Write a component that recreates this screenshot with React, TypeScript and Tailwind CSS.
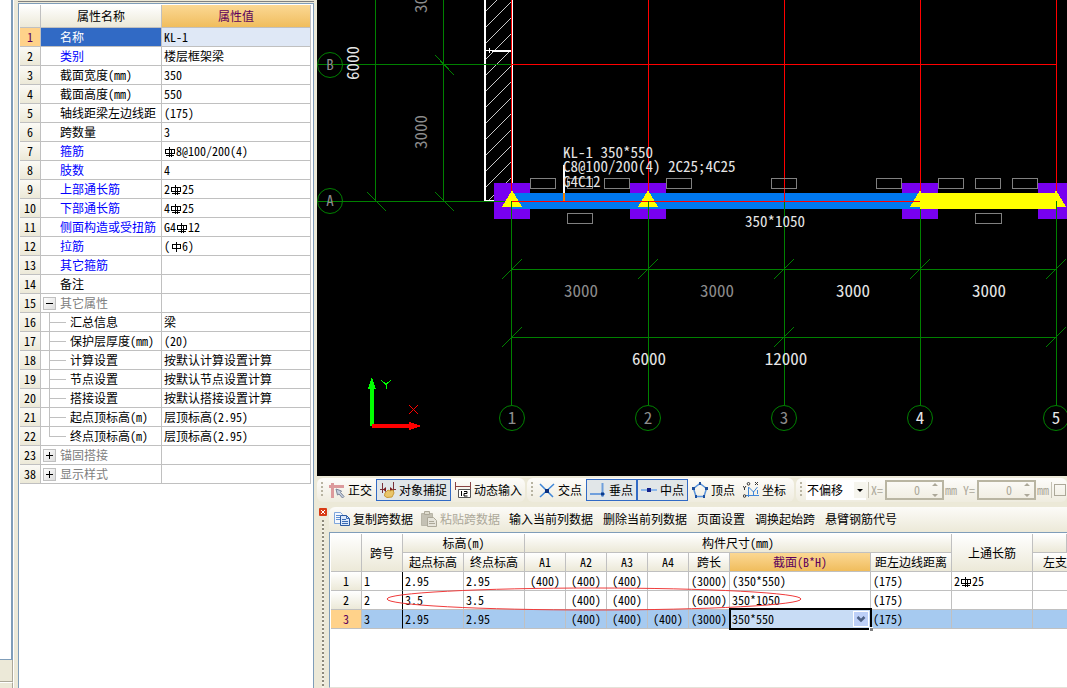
import type { ReactNode } from "react";
import clsx from "clsx";

type Prop = {
  no: number;
  name: string;
  value?: string;
  kind?: "link" | "group" | "child";
  open?: boolean;
};

// "#" stands for the ribbed bar mark, "%" for the plain bar mark
const props: Prop[] = [
  { no: 1, name: "名称", value: "KL-1" },
  { no: 2, name: "类别", value: "楼层框架梁", kind: "link" },
  { no: 3, name: "截面宽度(mm)", value: "350" },
  { no: 4, name: "截面高度(mm)", value: "550" },
  { no: 5, name: "轴线距梁左边线距", value: "(175)" },
  { no: 6, name: "跨数量", value: "3" },
  { no: 7, name: "箍筋", value: "#8@100/200(4)", kind: "link" },
  { no: 8, name: "肢数", value: "4", kind: "link" },
  { no: 9, name: "上部通长筋", value: "2#25", kind: "link" },
  { no: 10, name: "下部通长筋", value: "4#25", kind: "link" },
  { no: 11, name: "侧面构造或受扭筋", value: "G4#12", kind: "link" },
  { no: 12, name: "拉筋", value: "(%6)", kind: "link" },
  { no: 13, name: "其它箍筋", kind: "link" },
  { no: 14, name: "备注" },
  { no: 15, name: "其它属性", kind: "group", open: true },
  { no: 16, name: "汇总信息", value: "梁", kind: "child" },
  { no: 17, name: "保护层厚度(mm)", value: "(20)", kind: "child" },
  { no: 18, name: "计算设置", value: "按默认计算设置计算", kind: "child" },
  { no: 19, name: "节点设置", value: "按默认节点设置计算", kind: "child" },
  { no: 20, name: "搭接设置", value: "按默认搭接设置计算", kind: "child" },
  { no: 21, name: "起点顶标高(m)", value: "层顶标高(2.95)", kind: "child" },
  { no: 22, name: "终点顶标高(m)", value: "层顶标高(2.95)", kind: "child" },
  { no: 23, name: "锚固搭接", kind: "group" },
  { no: 38, name: "显示样式", kind: "group" },
];

const spans = [
  ["1", "2.95", "2.95", "(400)", "(400)", "(400)", "", "(3000)", "(350*550)", "(175)", "2#25"],
  ["2", "3.5", "3.5", "", "(400)", "(400)", "", "(6000)", "350*1050", "(175)", ""],
  ["3", "2.95", "2.95", "", "(400)", "(400)", "(400)", "(3000)", "350*550", "(175)", ""],
];

const head = "bg-linear-to-b from-white to-[#ece9d8]";
const headActive = "bg-linear-to-b from-[#fbd893] to-[#f0bd5c] text-[#5c005c]";
const line = "border-b border-r border-[#c0c0c0]";

function Bar({ plain }: { plain?: boolean }) {
  return (
    <svg role="img" aria-label={plain ? "HPB300" : "HRB400"} className="inline-block size-3 align-[-2px]" viewBox="0 0 12 12" fill="none" stroke="currentColor" shapeRendering="crispEdges">
      {plain ? (
        <path d="M2.5 3.5h8v4h-8zM6.5 1v10" />
      ) : (
        <path d="M1.5 3.5h9v4h-9zM5.5 1v10M7.5 3v8M2 9.5h8" />
      )}
    </svg>
  );
}

function Marked({ text }: { text: string }) {
  return (
    <>
      {text.split(/([#%])/).map((part, i) => {
        if (part === "#") return <Bar key={i} />;
        if (part === "%") return <Bar key={i} plain />;
        return part;
      })}
    </>
  );
}

function PropertyTable() {
  return (
    <table className="w-full table-fixed border-separate border-spacing-0 leading-[18px]">
      <colgroup>
        <col className="w-[21px]" />
        <col className="w-[121px]" />
        <col />
      </colgroup>
      <thead>
        <tr className="h-[23px]">
          <th className={clsx(line, head, "p-0")} />
          <th className={clsx(line, head, "p-0 font-normal")}>属性名称</th>
          <th className={clsx(line, headActive, "p-0 font-normal")}>属性值</th>
        </tr>
      </thead>
      <tbody>
        {props.map((p) => (
          <tr key={p.no} className="h-[19px]">
            <th className={clsx(line, "p-0 font-normal", p.no === 1 ? "bg-[#ffd28a] text-[#5c005c]" : "bg-linear-to-b from-[#fbfaf5] to-[#ece9d8]")}>
              {p.no}
            </th>
            <td className={clsx(line, "p-0", p.no === 1 && "bg-[#316ac5] text-white")}>
              <div
                className={clsx(
                  "flex h-[18px] items-center whitespace-nowrap",
                  p.kind === "link" && "text-[#0000ff]",
                  p.kind === "group" && "gap-1 pl-0.5 text-[#808080]",
                  p.kind === "child" && "gap-1 pl-2",
                  p.kind !== "group" && p.kind !== "child" && "pl-[19px]",
                )}
              >
                {p.kind === "group" && (
                  <button aria-label={p.name} className="grid size-[13px] place-items-center border border-[#c0c0c0] bg-linear-to-br from-white to-[#dcdcdc] text-black">
                    <svg className="size-[7px]" viewBox="0 0 7 7" stroke="currentColor" shapeRendering="crispEdges">
                      <path d={p.open ? "M0 3.5h7" : "M0 3.5h7M3.5 0v7"} />
                    </svg>
                  </button>
                )}
                {p.kind === "child" && (
                  <svg className="h-[19px] w-[17px] shrink-0" viewBox="0 0 17 19" stroke="#c0c0c0" shapeRendering="crispEdges">
                    <path d={p.no === 22 ? "M0.5 0v10M0 9.5h17" : "M0.5 0v19M0 9.5h17"} />
                  </svg>
                )}
                <span>{p.name}</span>
              </div>
            </td>
            <td className={clsx(line, "whitespace-nowrap p-0 pl-0.5", p.no === 1 && "bg-[#dfe8f6]")}>
              <Marked text={p.value ?? ""} />
            </td>
          </tr>
        ))}
      </tbody>
    </table>
  );
}

const axes = [512, 648, 784, 920, 1056];
const tags = [530, 567, 604, 666, 771, 876, 938, 975, 1012];
const hatch = [11, 27, 43, 59, 75, 91, 107, 123, 139, 155, 171, 187];

function Drawing() {
  return (
    <svg className="absolute left-0 top-0 h-[476px] w-[750px] [font-feature-settings:'hwid']" viewBox="317 0 750 476" fill="none" shapeRendering="crispEdges">
      {/* hatched wall */}
      <g stroke="#c8c8c8">
        {hatch.map((y) => (
          <path key={y} d={`M486 ${y}L511 ${y - 25}`} />
        ))}
        <path d="M488 201L511 178M505 201L511 194" />
      </g>
      <path d="M485 0V201" stroke="#fff" strokeWidth="2" />
      <path d="M512.5 0V201M484 200.5H513" stroke="#fff" />
      <path d="M492 51H511" stroke="#fff" strokeWidth="2" />
      <path d="M486 50.5H492M489.5 48V53" stroke="#fff" />

      {/* columns and beams */}
      <g fill="#7800f0">
        <path d="M494 183h36v36h-36zM630 183h36v36h-36zM902 183h36v36h-36zM1038 183h36v36h-36z" />
      </g>
      <path d="M512 193H920V209H512z" fill="#0078f0" />
      <path d="M920 193H1056V209H920z" fill="#ff0" />

      {/* axis lines */}
      <g stroke="#008000">
        <path d="M375.5 0V201M443.5 0V201M318 64.5H512M318 201.5H512" />
        <path d="M435 55L454 75M435 192L454 211M367 192L386 211" />
        <path d="M511.5 201V405M648.5 201V405M784.5 201V405M920.5 209V405M1056.5 201V405" />
        <path d="M512 269.5H1056M512 337.5H1056" />
        {axes.map((x) => (
          <path key={x} d={`M${x - 10} 279L${x + 10} 259`} />
        ))}
        <path d="M502 347L522 327M774 347L794 327M1046 347L1066 327" />
      </g>
      <g stroke="#f00">
        <path d="M511.5 0V193M648.5 0V193M784.5 0V201M920.5 0V193M1056.5 0V193" />
        <path d="M512 64.5H1056" />
      </g>
      <g fill="#ff0">
        <path d="M512 190L522 207H502zM648 190L658 207H638zM920 190L930 207H910zM1056 190L1066 207H1046z" />
      </g>
      <path d="M512 201.5H920" stroke="#f00" />
      <path d="M511.5 201V219M648.5 201V219M1056.5 201V219" stroke="#008000" />

      <g stroke="#808080">
        {tags.map((x) => (
          <rect key={x} x={x + 0.5} y="178.5" width="25" height="10" />
        ))}
        <rect x="567.5" y="213.5" width="25" height="10" />
        <rect x="975.5" y="213.5" width="26" height="10" />
      </g>
      <path d="M564 165V193" stroke="#fff" strokeWidth="2" />
      <path d="M564 193V201" stroke="#f08000" strokeWidth="2" />

      {/* axis bubbles */}
      <g stroke="#008000" shapeRendering="auto">
        <circle cx="330" cy="65" r="12.5" />
        <circle cx="330" cy="201" r="12.5" />
        {axes.map((x) => (
          <circle key={x} cx={x} cy="418" r="12.5" />
        ))}
      </g>
      <g fill="#8c8c8c" fontSize="15" textAnchor="middle">
        <text x="330" y="70">B</text>
        <text x="330" y="206">A</text>
      </g>
      <g fontSize="17" textAnchor="middle">
        <g fill="#8c8c8c">
          <text x="581" y="297">3000</text>
          <text x="717" y="297">3000</text>
          <text x="512" y="424">1</text>
          <text x="648" y="424">2</text>
          <text x="784" y="424">3</text>
          <text transform="translate(427 132) rotate(-90)">3000</text>
          <text transform="translate(427 -4) rotate(-90)">3000</text>
        </g>
        <g fill="#e6e6e6">
          <text x="853" y="297">3000</text>
          <text x="989" y="297">3000</text>
          <text x="649" y="365">6000</text>
          <text x="786" y="365">12000</text>
          <text x="920" y="424">4</text>
          <text x="1056" y="424">5</text>
          <text transform="translate(359 63) rotate(-90)">6000</text>
        </g>
      </g>
      <g fill="#e6e6e6" fontSize="15">
        <text x="563" y="158">KL-1 350*550</text>
        <text x="563" y="172">C8@100/200(4) 2C25;4C25</text>
        <text x="563" y="187">G4C12</text>
        <text x="745" y="227">350*1050</text>
      </g>

      {/* UCS */}
      <path d="M370 426V389H368L372 377L376 389H374V426z" fill="#0f0" />
      <path d="M372 424H409V422L421 426L409 430V428H372z" fill="#f00" />
      <path d="M381 380L386 384.5L391 380M386.5 384V389" stroke="#0f0" />
      <path d="M409 405L418 414M418 405L409 414" stroke="#f00" />
    </svg>
  );
}

function Grip() {
  return (
    <svg className="mr-px h-4 w-[3px] shrink-0" viewBox="0 0 3 16" fill="#b8b4a2">
      <path d="M0 0h2v2H0zM0 4h2v2H0zM0 8h2v2H0zM0 12h2v2H0z" />
    </svg>
  );
}

const icons = {
  ortho: (
    <>
      <path d="M0 4.5h15M3.5 1v15" stroke="#dc9a9c" strokeWidth="3" />
      <path d="M7 7l5.500 2-1 1.500 3.500 4-1.500 1.500-3.500-4-1.500 1z" fill="#c4cede" stroke="#7d8597" />
    </>
  ),
  snap: (
    <>
      <path d="M0 7.500h5M11 7.500h5M2.500 1v10M13.500 0v9" stroke="#7a3038" />
      <path d="M3 7.500l3-2.500v5zM13 7.500l-3-2.500v5z" fill="#7a1c20" />
      <path d="M5 11l3-3 2 1 3-1 1 3-2 4-5 .500-2.500-1.500z" fill="#e9c56a" stroke="#c99a38" />
    </>
  ),
  dynamic: (
    <>
      <path d="M0 4.500h16M.5 0v8M15.500 0v8" stroke="#8a4444" />
      <path d="M3.500 7.500h12v8h-12z" fill="#fff" stroke="#555" />
      <path d="M6.500 9v5M9 9.500h3v2h-3v2.500h3.500" stroke="#000" />
    </>
  ),
  cross: (
    <>
      <path d="M1 2l13 13M15 2L1 15" stroke="#3f86d8" strokeWidth="1.500" />
      <path d="M6 7h4v4H6z" fill="#0a2e7c" />
    </>
  ),
  perp: (
    <>
      <path d="M0 12h15M12.500 1v14" stroke="#6f9fdc" strokeWidth="2" />
      <path d="M11 10.500h3v3h-3z" fill="#0a3a8c" />
    </>
  ),
  mid: (
    <>
      <path d="M0 8h16" stroke="#8db7ea" strokeWidth="2" />
      <path d="M6 6h4v4H6z" fill="#16228c" />
    </>
  ),
  vertex: (
    <>
      <path d="M8 1.500l6.500 5-2.500 8H4l-2.500-8z" stroke="#5c95dc" strokeWidth="1.500" />
      <path d="M7 0h2v3H7zM0 5h3v3H0zM13 5h3v3h-3zM3 13h2v3H3zM11 13h2v3h-2z" fill="#1d4f9e" />
    </>
  ),
  coord: (
    <>
      <path d="M5.500 5v10M3 13.500h13M5.500 5l5 5 4-5M10.500 9v5M14.500 8v4" stroke="#3f86d8" />
      <path d="M0 4l1.500 2L3 4M1.500 6v2M12 0l3 3M15 0l-3 3" stroke="#333" />
      <circle cx="5.500" cy="1.800" r="1.300" stroke="#333" />
      <circle cx="1.500" cy="14" r="1.300" stroke="#333" />
    </>
  ),
  copy: (
    <>
      <path d="M.500 1.500h6l2 2v9h-8z" fill="#f4f8fe" stroke="#7fa6dc" />
      <path d="M2 4.500h4M2 6.500h4M2 8.500h4" stroke="#5f8fd2" />
      <path d="M6.500 4.500h6l3 3v7h-9z" fill="#dbe8fa" stroke="#2c5aa0" />
      <path d="M12.500 4.500v3h3M8 8.500h4M8 10.500h6M8 12.500h6" stroke="#3b6cb4" />
    </>
  ),
  paste: (
    <>
      <path d="M.500 2.500h11v12H.500z" fill="#c4c1b4" stroke="#b9b6a8" />
      <path d="M3.500.500h5v3h-5z" fill="#dedbcd" stroke="#aca899" />
      <path d="M6.500 6.500h6l3 3v6h-9z" fill="#e6e4da" stroke="#aca899" />
      <path d="M8 10.500h5M8 12.500h6" stroke="#aca899" />
    </>
  ),
};

function Tool({ icon, on, off, children }: { icon?: keyof typeof icons; on?: boolean; off?: boolean; children: ReactNode }) {
  return (
    <button
      disabled={off}
      className={clsx(
        "flex h-[22px] shrink-0 items-center gap-[3px] whitespace-nowrap border px-[3px]",
        on ? "border-[#316ac5] bg-[#e1e6e8]" : "border-transparent",
        off && "text-[#aca899]",
      )}
    >
      {icon && (
        <svg className="size-4" viewBox="0 0 16 16" fill="none">
          {icons[icon]}
        </svg>
      )}
      {children}
    </button>
  );
}

function Offset({ id, label }: { id: string; label: string }) {
  return (
    <div className="flex shrink-0 items-center gap-0.5 text-[#aca899]">
      <label htmlFor={id}>{label}</label>
      <div className="flex h-5 w-[59px] items-center border-2 border-[#b9b5a2] pr-1">
        <input id={id} defaultValue="0" disabled className="w-full min-w-0 pr-3 text-right" />
        <svg className="h-[14px] w-[6px] shrink-0" viewBox="0 0 6 14" fill="#aca899">
          <path d="M3 0l3 3H0zM0 11h6l-3 3z" />
        </svg>
      </div>
      <span className="-ml-px">mm</span>
    </div>
  );
}

const strip = "flex h-6 items-center rounded-md bg-linear-to-b from-[#fdfcfa] to-[#efecdf]";

function SnapBar() {
  return (
    <div className="flex h-[31px] items-start gap-0.5 overflow-hidden pt-0.5">
      <div className={clsx(strip, "w-[208px] shrink-0 pl-1")}>
        <Grip />
        <Tool icon="ortho">正交</Tool>
        <Tool icon="snap" on>对象捕捉</Tool>
        <Tool icon="dynamic">动态输入</Tool>
      </div>
      <div className={clsx(strip, "w-[267px] shrink-0 pl-1")}>
        <Grip />
        <Tool icon="cross">交点</Tool>
        <Tool icon="perp" on>垂点</Tool>
        <Tool icon="mid" on>中点</Tool>
        <Tool icon="vertex">顶点</Tool>
        <Tool icon="coord">坐标</Tool>
      </div>
      <div className={clsx(strip, "flex-1 gap-0.5 pl-1")}>
        <Grip />
        <div className="relative h-5 w-[60px] shrink-0 bg-white">
          <select aria-label="偏移方式" className="h-5 w-full appearance-none pl-px leading-5">
            <option>不偏移</option>
          </select>
          <svg className="pointer-events-none absolute right-0 top-0.5 h-4 w-3 bg-[#f6f5ee]" viewBox="0 0 12 16">
            <path d="M3 7h6l-3 3z" fill="#000" />
          </svg>
        </div>
        <i className="h-4 w-px shrink-0 bg-[#c5c2b4]" />
        <Offset id="dx" label="X=" />
        <i className="w-0.5 shrink-0" />
        <Offset id="dy" label="Y=" />
        <i className="h-4 w-px shrink-0 bg-[#c5c2b4]" />
        <input type="checkbox" aria-label="旋转" disabled className="size-3 shrink-0 appearance-none border border-[#aca899]" />
      </div>
    </div>
  );
}

function SpanTable() {
  const th = clsx(line, head, "whitespace-nowrap p-0 font-normal");
  return (
    <table className="w-full table-fixed border-separate border-spacing-0 leading-[18px]">
      <colgroup>
        <col className="w-[31px]" />
        <col className="w-[41px]" />
        <col className="w-[61px]" />
        <col className="w-[61px]" />
        <col className="w-[41px]" />
        <col className="w-[41px]" />
        <col className="w-[41px]" />
        <col className="w-[41px]" />
        <col className="w-[41px]" />
        <col className="w-[141px]" />
        <col className="w-[81px]" />
        <col className="w-[81px]" />
        <col />
      </colgroup>
      <thead>
        <tr className="h-[19px]">
          <th rowSpan={2} className={th} />
          <th rowSpan={2} className={th}>跨号</th>
          <th colSpan={2} className={th}>标高(m)</th>
          <th colSpan={7} className={th}>构件尺寸(mm)</th>
          <th rowSpan={2} className={th}>上通长筋</th>
          <th className={th} />
        </tr>
        <tr className="h-[19px]">
          <th className={th}>起点标高</th>
          <th className={th}>终点标高</th>
          <th className={th}>A1</th>
          <th className={th}>A2</th>
          <th className={th}>A3</th>
          <th className={th}>A4</th>
          <th className={th}>跨长</th>
          <th className={clsx(line, headActive, "p-0 font-normal")}>截面(B*H)</th>
          <th className={th}>距左边线距离</th>
          <th className={clsx("whitespace-nowrap border-b border-[#c0c0c0] p-0 pl-2.5 text-left font-normal", head)}>左支</th>
        </tr>
      </thead>
      <tbody>
        {spans.map((row, r) => (
          <tr key={r} className={clsx("h-[19px]", r === 2 && "bg-[#a6caf0]")}>
            <th className={clsx(line, "p-0 font-normal", r === 2 ? "bg-[#ffd28a] text-[#5c005c]" : head)}>{r + 1}</th>
            {row.map((cell, c) => (
              <td
                key={c}
                className={clsx(
                  "border-b border-r border-b-[#c0c0c0] p-0",
                  c === 0 ? "border-r-black" : "border-r-[#c0c0c0]",
                  c >= 3 && c <= 7 ? "text-center" : "pl-0.5",
                )}
              >
                {r === 2 && c === 8 ? (
                  <div className="relative -my-0.5 -ml-[3px] -mr-0.5 h-[22px] border-2 border-black bg-[#c8dcf5]">
                    <select aria-label="截面" className="h-[18px] w-full appearance-none pl-px leading-[18px]">
                      <option>{cell}</option>
                    </select>
                    <svg className="pointer-events-none absolute right-px top-px size-4 border border-white bg-[#bdd0f8]" viewBox="0 0 14 14" fill="none">
                      <path d="M3.500 5l3.500 3.500L10.500 5" stroke="#4d6185" strokeWidth="2.500" />
                    </svg>
                    <i className="absolute -bottom-[3px] -right-[3px] size-1 border-l border-t border-white bg-[#808080]" />
                  </div>
                ) : (
                  <Marked text={cell} />
                )}
              </td>
            ))}
            <td className="border-b border-b-[#c0c0c0] p-0" />
          </tr>
        ))}
      </tbody>
    </table>
  );
}

function SpanDock() {
  return (
    <div className="flex h-[181px] shrink-0">
      <div className="flex w-3 shrink-0 flex-col items-center gap-1 pt-px">
        <button aria-label="关闭" className="size-2 rounded-[1px] bg-[#d83a14] text-white">
          <svg className="size-2" viewBox="0 0 8 8" stroke="currentColor">
            <path d="M2 2l4 4M6 2L2 6" />
          </svg>
        </button>
        <div className="w-0.5 flex-1 bg-[repeating-linear-gradient(to_bottom,#8d8a7c_0px,#8d8a7c_2px,#f5f3ea_2px,#f5f3ea_4px)]" />
      </div>
      <div className="flex min-w-0 flex-1 flex-col">
        <div className="flex h-[25px] shrink-0 items-center overflow-hidden rounded-tl-md bg-linear-to-b from-[#fcfbf8] to-[#ece9d8] pb-0.5 pl-px">
          <Tool icon="copy">复制跨数据</Tool>
          <Tool icon="paste" off>粘贴跨数据</Tool>
          <div className="flex items-center gap-0.5 pl-px">
            <Tool>输入当前列数据</Tool>
            <Tool>删除当前列数据</Tool>
            <Tool>页面设置</Tool>
            <Tool>调换起始跨</Tool>
            <Tool>悬臂钢筋代号</Tool>
          </div>
        </div>
        <div className="relative flex-1 overflow-hidden border-b border-l border-t border-b-[#e4e2d8] border-l-[#7f9db9] border-t-[#7f9db9] bg-white pl-px pt-px">
          <SpanTable />
          <svg className="pointer-events-none absolute left-14 top-[54px] h-6 w-[418px]" viewBox="0 0 418 24" fill="none">
            <ellipse cx="208" cy="12" rx="207" ry="11" stroke="#f03c3c" />
          </svg>
        </div>
      </div>
    </div>
  );
}

export default function App() {
  return (
    <div className="flex h-screen overflow-hidden bg-[#ece9d8] font-['Noto_Sans_CJK_SC',sans-serif] text-[12px] text-black [font-feature-settings:'hwid']">
      {/* edge of the neighbouring tree panel */}
      <div className="flex w-[14px] shrink-0 flex-col border-r border-white">
        <div className="flex-1 border-b border-r-2 border-[#7f9db9] bg-white" />
        <div className="h-[22px] border-b border-r border-[#aca899]" />
        <div className="h-[6px] border-r border-t border-[#aca899] border-t-white" />
      </div>
      <div className="flex w-[300px] shrink-0 flex-col pl-1">
        <div className="h-[3px] border-b border-t border-b-[#ece9d8] border-t-[#ece9d8] bg-[#808080]" />
        <div className="flex-1 border-x border-t border-[#7f9db9] bg-white pl-px pr-0.5 pt-px">
          <PropertyTable />
        </div>
      </div>
      <div className="flex min-w-0 flex-1 flex-col pl-[3px]">
        <main className="relative min-h-0 flex-1 overflow-hidden bg-black">
          <Drawing />
        </main>
        <SnapBar />
        <SpanDock />
      </div>
    </div>
  );
}
